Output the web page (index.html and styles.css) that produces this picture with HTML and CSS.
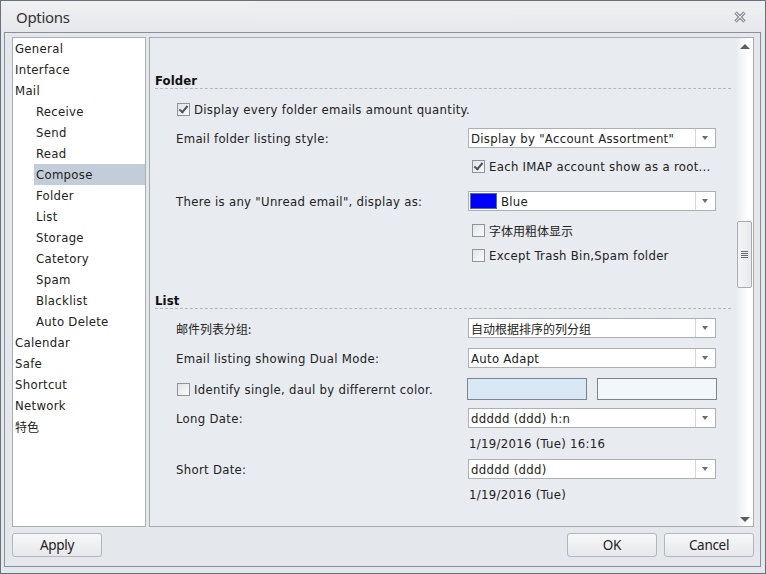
FILE: index.html
```html
<!DOCTYPE html>
<html lang="en">
<head>
	<meta charset="UTF-8">
	<title>Options</title>
	<link rel="stylesheet" href="styles.css">
</head>
<body>
	<div class="window">
		<div class="titlebar">
			<span class="title">Options</span>
			<svg class="close" width="12" height="12" viewBox="0 0 12 12">
				<path d="M1.5 1.5 L10.5 10.5 M10.5 1.5 L1.5 10.5" stroke="#5b5f66" stroke-width="3" fill="none"/>
				<path d="M1.5 1.5 L10.5 10.5 M10.5 1.5 L1.5 10.5" stroke="#eceef1" stroke-width="1.2" fill="none"/>
			</svg>
		</div>
		<div class="frame">
			<div class="main">
				<ul class="nav">
					<li>General</li>
					<li>Interface</li>
					<li>Mail</li>
					<li class="sub">Receive</li>
					<li class="sub">Send</li>
					<li class="sub">Read</li>
					<li class="sub current">Compose</li>
					<li class="sub">Folder</li>
					<li class="sub">List</li>
					<li class="sub">Storage</li>
					<li class="sub">Catetory</li>
					<li class="sub">Spam</li>
					<li class="sub">Blacklist</li>
					<li class="sub">Auto Delete</li>
					<li>Calendar</li>
					<li>Safe</li>
					<li>Shortcut</li>
					<li>Network</li>
					<li class="cjk">特色</li>
				</ul>
				<div class="panel">
					<div class="content">
						<div class="head">Folder</div>
						<div class="row g10">
							<span class="chk on"></span><span class="chk-lbl">Display every folder emails amount quantity.</span>
						</div>
						<div class="row g9">
							<span class="lbl">Email folder listing style:</span>
							<div class="select"><span class="val">Display by "Account Assortment"</span><span class="drop"></span></div>
						</div>
						<div class="row ctl g8">
							<span class="chk on"></span><span class="chk-lbl">Each IMAP account show as a root...</span>
						</div>
						<div class="row g15">
							<span class="lbl">There is any "Unread email", display as:</span>
							<div class="select"><span class="swatch"></span><span class="val">Blue</span><span class="drop"></span></div>
						</div>
						<div class="row ctl g9">
							<span class="chk"></span><span class="chk-lbl cjk">字体用粗体显示</span>
						</div>
						<div class="row ctl g5">
							<span class="chk"></span><span class="chk-lbl">Except Trash Bin,Spam folder</span>
						</div>

						<div class="head g28">List</div>
						<div class="row g9">
							<span class="lbl cjk">邮件列表分组:</span>
							<div class="select"><span class="val cjk">自动根据排序的列分组</span><span class="drop"></span></div>
						</div>
						<div class="row g10">
							<span class="lbl">Email listing showing Dual Mode:</span>
							<div class="select"><span class="val">Auto Adapt</span><span class="drop"></span></div>
						</div>
						<div class="row tall g10">
							<span class="chk"></span><span class="chk-lbl wide">Identify single, daul by differernt color.</span>
							<span class="colorbox c1"></span><span class="colorbox c2"></span>
						</div>
						<div class="row g8">
							<span class="lbl">Long Date:</span>
							<div class="select"><span class="val">ddddd (ddd) h:n</span><span class="drop"></span></div>
						</div>
						<div class="row ctl-text g5">1/19/2016 (Tue) 16:16</div>
						<div class="row g6">
							<span class="lbl">Short Date:</span>
							<div class="select"><span class="val">ddddd (ddd)</span><span class="drop"></span></div>
						</div>
						<div class="row ctl-text g5">1/19/2016 (Tue)</div>
					</div>
					<div class="scrollbar">
						<span class="arrow up"></span>
						<span class="thumb"><span class="grip"></span></span>
						<span class="arrow down"></span>
					</div>
				</div>
			</div>
			<div class="footer">
				<button class="btn">Apply</button>
				<div class="right">
					<button class="btn">OK</button>
					<button class="btn">Cancel</button>
				</div>
			</div>
		</div>
	</div>
</body>
</html>
```

FILE: styles.css
```css
*{margin: 0px; padding: 0px; box-sizing: border-box;}
body{
	width: 766px;
	height: 574px;
	overflow: hidden;
	font-family: "DejaVu Sans Condensed", "DejaVu Sans", "Noto Sans CJK SC", sans-serif;
	font-size: 13px;
	letter-spacing: 0.3px;
	color: #222;
}
.cjk{
	font-family: "Noto Sans CJK SC", sans-serif;
	font-size: 12px;
	letter-spacing: 0;
}
.window{
	width: 766px;
	height: 574px;
	border: 1px solid #687079;
	background: #e4e7eb;
	display: flex;
	flex-direction: column;
}
.titlebar{
	height: 31px;
	flex: none;
	display: flex;
	align-items: center;
	justify-content: space-between;
	padding: 0 19px 0 15px;
	background: linear-gradient(#eff0f2, #e6e8eb);
}
.title{
	font-family: "Noto Sans", sans-serif;
	font-size: 15px;
	color: #333;
	letter-spacing: -0.3px;
}
.frame{
	flex: 1;
	margin: 0 4px 6px 3px;
	border: 1px solid #8a9098;
	padding: 4px 6px 9px 7px;
	display: flex;
	flex-direction: column;
	background: #e4e7eb;
}
.main{
	height: 490px;
	display: flex;
	gap: 3px;
}
.nav{
	width: 134px;
	list-style-type: none;
	background: #fff;
	border: 1px solid #a9aeb5;
}
.nav li{
	height: 21px;
	line-height: 21px;
	padding-left: 2px;
	white-space: nowrap;
}
.nav li.sub{
	margin-left: 21px;
}
.nav li.current{
	background: #c3cdd9;
}
.panel{
	flex: 1;
	display: flex;
	border: 1px solid #a6abb2;
	background: #e8ebf0;
}
.content{
	flex: 1;
	padding: 35px 5px 0 5px;
}
.head{
	height: 16px;
	line-height: 16px;
	font-weight: bold;
	letter-spacing: 0.1px;
	color: #111;
	border-bottom: 1px dashed #b4b8be;
}
.row{
	height: 20px;
	display: flex;
	align-items: center;
	padding-left: 21px;
	white-space: nowrap;
}
.row.ctl{
	padding-left: 316px;
}
.row.ctl-text{
	padding-left: 314px;
}
.row.tall{
	height: 22px;
}
.g5{margin-top: 5px;}
.g6{margin-top: 6px;}
.g8{margin-top: 8px;}
.g9{margin-top: 9px;}
.g10{margin-top: 10px;}
.g15{margin-top: 15px;}
.g28{margin-top: 28px;}
.lbl{
	width: 292px;
	flex: none;
}
.chk{
	width: 13px;
	height: 13px;
	flex: none;
	margin-left: 1px;
	border: 1px solid #8e949b;
	background: linear-gradient(135deg, #e2e4e7, #fbfbfc);
	position: relative;
}
.chk.on::after{
	content: "";
	position: absolute;
	left: 3px;
	top: 0px;
	width: 3px;
	height: 7px;
	border: solid #505459;
	border-width: 0 2px 2px 0;
	transform: rotate(40deg);
}
.chk-lbl{
	margin-left: 4px;
}
.chk-lbl.wide{
	width: 273px;
}
.select{
	width: 248px;
	height: 20px;
	display: flex;
	align-items: center;
	background: #fff;
	border: 1px solid #abb0b7;
}
.select .val{
	flex: 1;
	padding-left: 2px;
	overflow: hidden;
}
.swatch{
	width: 27px;
	height: 16px;
	margin-left: 1px;
	background: #0000ff;
	border: 1px solid #5b6b8a;
}
.swatch + .val{
	padding-left: 4px;
}
.drop{
	width: 20px;
	height: 18px;
	border-left: 1px solid #d4d7dc;
	position: relative;
}
.drop::after{
	content: "";
	position: absolute;
	left: 6px;
	top: 7px;
	border-left: 3.5px solid transparent;
	border-right: 3.5px solid transparent;
	border-top: 4px solid #6a6e74;
}
.colorbox{
	width: 120px;
	height: 22px;
	border: 1px solid #7d838b;
}
.c1{
	background: #d8e8f5;
}
.c2{
	background: #f1f7fb;
	margin-left: 10px;
}
.scrollbar{
	width: 17px;
	display: flex;
	flex-direction: column;
	align-items: center;
	background: linear-gradient(to right, #e8ebf0, #ffffff 70%);
	padding: 6px 0 4px;
}
.arrow{
	width: 0;
	height: 0;
	border-left: 5px solid transparent;
	border-right: 5px solid transparent;
	margin-left: 1px;
}
.arrow.up{
	border-bottom: 5px solid #5a5e64;
}
.arrow.down{
	border-top: 5px solid #5a5e64;
	margin-top: auto;
}
.thumb{
	width: 15px;
	height: 67px;
	margin-top: 172px;
	border: 1px solid #a9adb3;
	border-radius: 2px;
	background: linear-gradient(to right, #f4f5f6, #e7e9ec);
	display: flex;
	align-items: center;
	justify-content: center;
}
.grip{
	width: 7px;
	height: 7px;
	background: repeating-linear-gradient(#666a70 0 1px, transparent 1px 2px);
}
.footer{
	margin-top: 6px;
	height: 24px;
	display: flex;
	justify-content: space-between;
}
.right{
	display: flex;
	gap: 7px;
}
.btn{
	width: 90px;
	height: 24px;
	border: 1px solid #b3b7bd;
	border-radius: 3px;
	background: linear-gradient(#f6f7f8, #e6e8eb);
	font-family: "Noto Sans", sans-serif;
	font-size: 13.5px;
	color: #222;
	letter-spacing: -0.3px;
}
```
